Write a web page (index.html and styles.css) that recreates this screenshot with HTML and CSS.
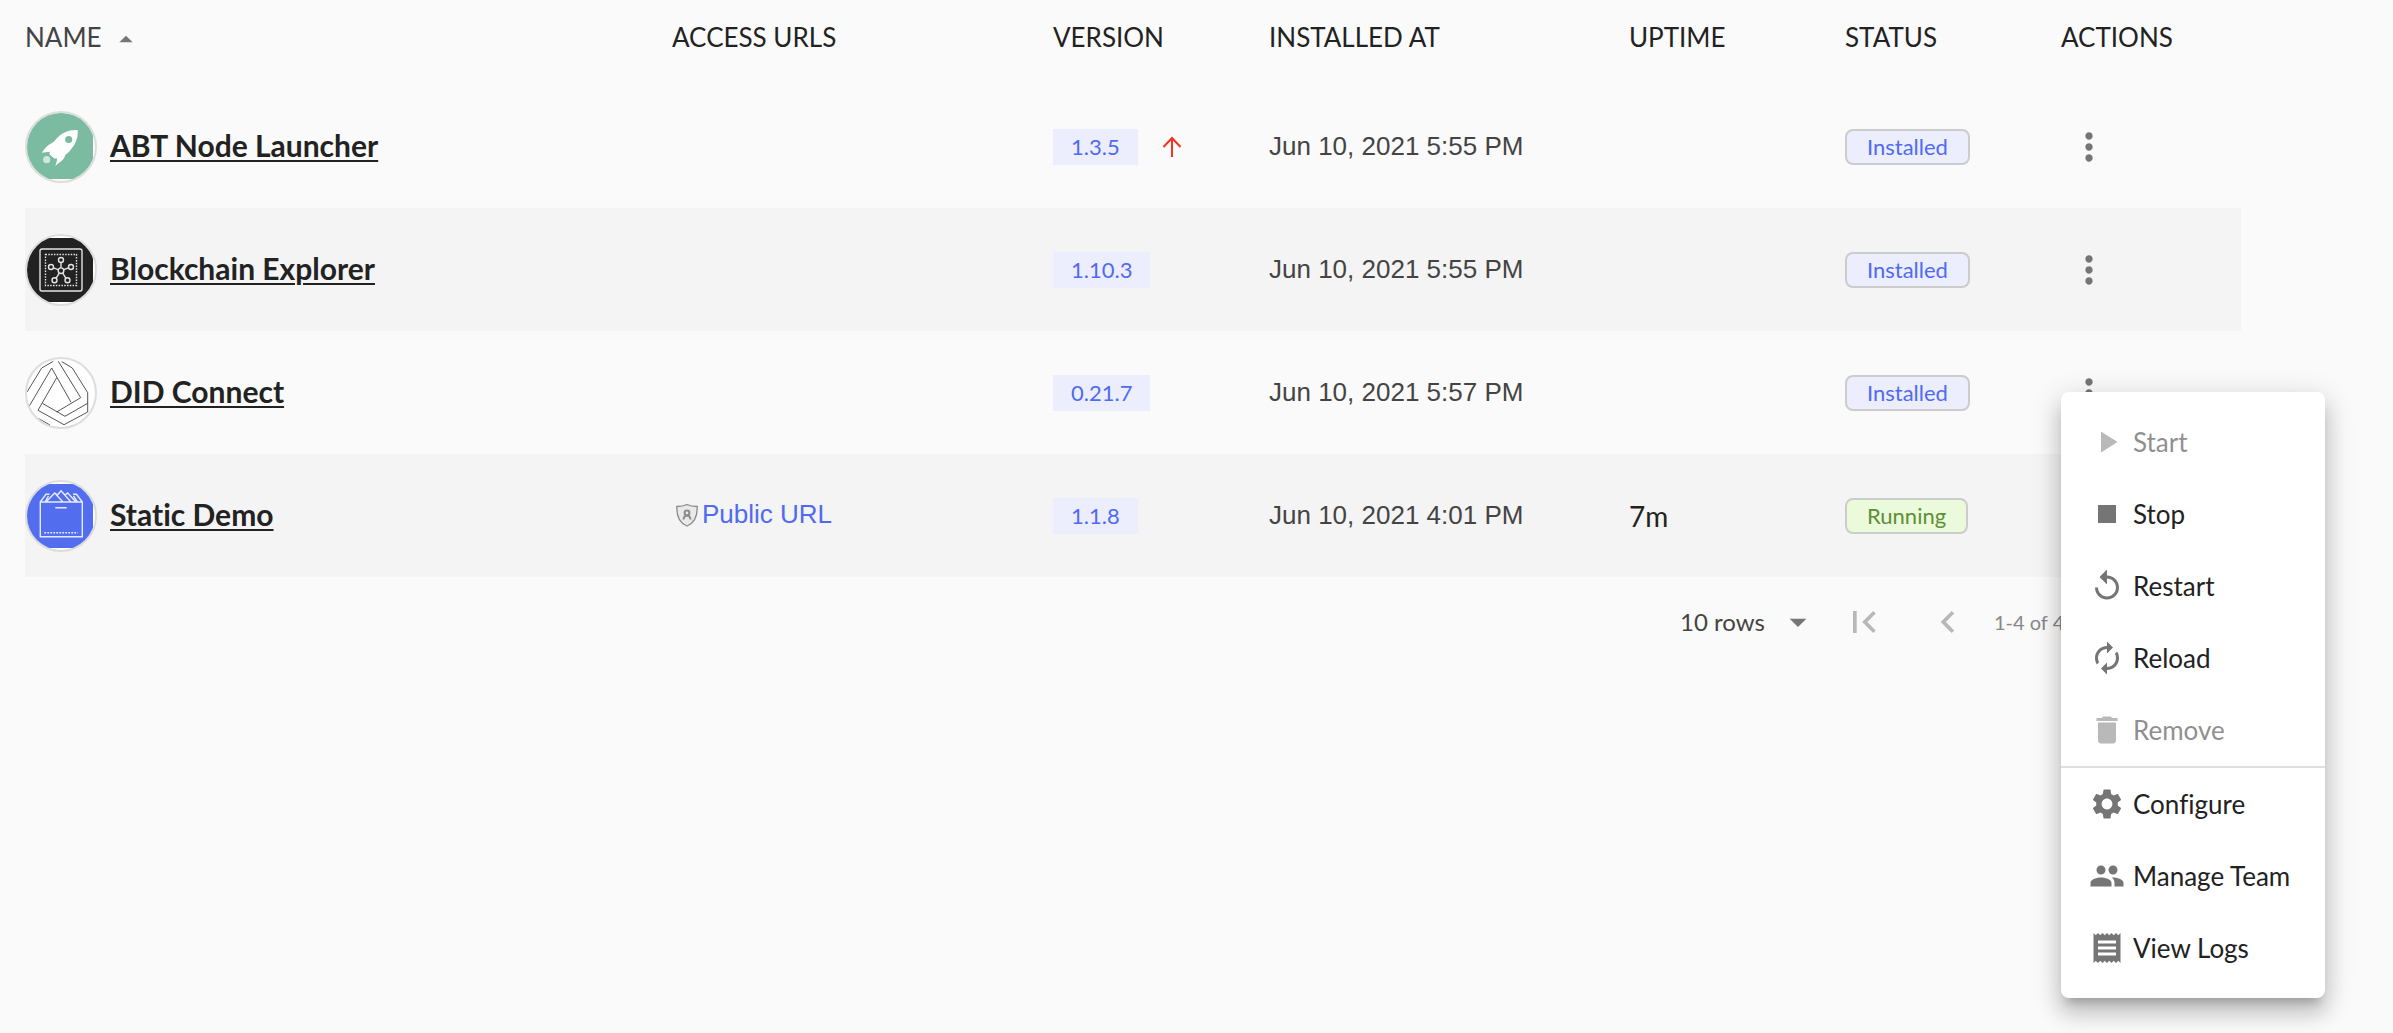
FILE: index.html
```html
<!DOCTYPE html>
<html lang="en">
<head>
<meta charset="utf-8">
<title>Blocklets</title>
<link rel="stylesheet" href="styles.css">
</head>
<body>
<svg class="sprite" aria-hidden="true">
  <symbol id="more" viewBox="0 0 24 24"><path d="M12 8c1.1 0 2-.9 2-2s-.9-2-2-2-2 .9-2 2 .9 2 2 2zm0 2c-1.1 0-2 .9-2 2s.9 2 2 2 2-.9 2-2-.9-2-2-2zm0 6c-1.1 0-2 .9-2 2s.9 2 2 2 2-.9 2-2-.9-2-2-2z"/></symbol>
</svg>
<main class="page">
  <table class="blocklets">
    <colgroup>
      <col class="col-name"><col class="col-urls"><col class="col-version"><col class="col-date"><col class="col-uptime"><col class="col-status"><col class="col-actions">
    </colgroup>
    <thead>
      <tr>
        <th scope="col" aria-sort="ascending"><button class="sort" type="button">NAME<svg width="32" height="32" viewBox="0 0 24 24" aria-hidden="true"><path d="M7 16l5-5 5 5z"/></svg></button></th>
        <th scope="col">ACCESS URLS</th>
        <th scope="col">VERSION</th>
        <th scope="col">INSTALLED AT</th>
        <th scope="col">UPTIME</th>
        <th scope="col">STATUS</th>
        <th scope="col">ACTIONS</th>
      </tr>
    </thead>
    <tbody>
      <tr>
        <td>
          <div class="name">
            <svg class="avatar" viewBox="0 0 72 72" aria-hidden="true">
              <clipPath id="round"><circle cx="36" cy="36" r="34"/></clipPath>
              <circle cx="36" cy="36" r="35" fill="#fff" stroke="#ddd" stroke-width="2"/>
              <g clip-path="url(#round)">
                <rect x="2" y="2" width="66" height="66" fill="#7abba1"/>
                <path fill="#fff" d="M52.7 19C44 18.500 36.500 22 31.500 27.500C29.500 30 28 31.500 27 32C23 33.500 20 37.500 16.700 41.700L25 40.800C24 42.500 24.500 43.500 25.500 44.300L29.300 47.500L31.800 47.200C32.500 50 31 52 30.300 55C35 50.500 39.500 49 40 44.500C41 43 43 42 44.500 40.200C50 34 53.500 27 52.700 19Z"/>
                <circle cx="43.700" cy="28.500" r="3.600" fill="#7abba1"/>
                <circle cx="21.700" cy="48.700" r="3.600" fill="#fff" opacity=".65"/>
              </g>
            </svg>
            <a href="#abt-node-launcher">ABT Node Launcher</a>
          </div>
        </td>
        <td></td>
        <td>
          <div class="version"><span class="tag">1.3.5</span><svg class="upgrade" width="24" height="24" viewBox="0 0 24 24" aria-label="Upgrade available"><path d="M12 22V3M3.500 12L12 3l8.500 9"/></svg></div>
        </td>
        <td class="date">Jun 10, 2021 5:55 PM</td>
        <td></td>
        <td><span class="tag status">Installed</span></td>
        <td><button class="more" type="button" aria-label="Actions"><svg><use href="#more"/></svg></button></td>
      </tr>
      <tr>
        <td>
          <div class="name">
            <svg class="avatar" viewBox="0 0 72 72" aria-hidden="true">
              <circle cx="36" cy="36" r="35" fill="#fff" stroke="#ddd" stroke-width="2"/>
              <g clip-path="url(#round)">
                <rect x="2" y="4" width="66" height="64" fill="#222"/>
                <g fill="none" stroke="#e4e4e4" stroke-width="1.400">
                  <rect x="15" y="15" width="42" height="42" rx="2"/>
                  <rect x="20.500" y="20.500" width="31" height="31" stroke-dasharray="1.500 1.300"/>
                  <circle cx="36" cy="36.700" r="2.800"/><circle cx="36" cy="26" r="2.500"/><circle cx="26" cy="33" r="2.500"/><circle cx="46" cy="33" r="2.500"/><circle cx="29.500" cy="46.300" r="2.500"/><circle cx="42.500" cy="46.300" r="2.500"/>
                  <path d="M36 28.500v5.400M28.400 33.900l4.800 1.800M43.600 33.900l-4.800 1.800M31 44.300l3.300-5.200M41 44.300l-3.300-5.200"/>
                </g>
              </g>
            </svg>
            <a href="#blockchain-explorer">Blockchain Explorer</a>
          </div>
        </td>
        <td></td>
        <td><span class="tag">1.10.3</span></td>
        <td class="date">Jun 10, 2021 5:55 PM</td>
        <td></td>
        <td><span class="tag status">Installed</span></td>
        <td><button class="more" type="button" aria-label="Actions"><svg><use href="#more"/></svg></button></td>
      </tr>
      <tr>
        <td>
          <div class="name">
            <svg class="avatar" viewBox="0 0 72 72" aria-hidden="true">
              <circle cx="36" cy="36" r="35" fill="#fff" stroke="#ddd" stroke-width="2"/>
              <g clip-path="url(#round)" fill="none" stroke="#555">
                <path d="M2 35L16.700 11L28.300 4.300M26.700 11L4.300 49M26.700 11L46 45.300M33.300 4.300L55.700 40.700L31.700 55M36.700 4.500L47.300 11L62.700 35.700V55L39 67.700L13 53.300L31.700 20.700M17.300 46.300L40 59.300L62.700 46.300M13 61.300L25 68"/>
              </g>
            </svg>
            <a href="#did-connect">DID Connect</a>
          </div>
        </td>
        <td></td>
        <td><span class="tag">0.21.7</span></td>
        <td class="date">Jun 10, 2021 5:57 PM</td>
        <td></td>
        <td><span class="tag status">Installed</span></td>
        <td><button class="more" type="button" aria-label="Actions" aria-expanded="true"><svg><use href="#more"/></svg></button></td>
      </tr>
      <tr>
        <td>
          <div class="name">
            <svg class="avatar" viewBox="0 0 72 72" aria-hidden="true">
              <circle cx="36" cy="36" r="35" fill="#fff" stroke="#ddd" stroke-width="2"/>
              <g clip-path="url(#round)">
                <rect x="2" y="4" width="66" height="64" fill="#526eee"/>
                <g fill="none" stroke="#e6eaff" stroke-width="1.400">
                  <path d="M15.300 22H57.300V56.700H15.300ZM15.300 22L21 14.300H24.500M57.300 22L51.500 14.300H48M20 22L23.500 16M52.500 22L48.500 16M21.500 21.500L29.700 13L32.500 15L36 10.700L40 15L42.700 13L50.500 21.500M29.700 13L37.500 21.500M36 10.700L45.500 21.500"/>
                  <path d="M30.300 27.700H41.700"/>
                  <path d="M19.300 52.700H52.700" stroke-dasharray="1.800 1.200"/>
                </g>
              </g>
            </svg>
            <a href="#static-demo">Static Demo</a>
          </div>
        </td>
        <td>
          <a class="url" href="#public-url"><svg width="30" height="30" viewBox="0 0 30 30" aria-hidden="true"><path d="M15 4.500c3 1.500 6.500 2 10.200 2C25.500 16 22.500 23 15 26C7.500 23 4.500 16 4.800 6.500C8.500 6.500 12 6 15 4.500Z" fill="#e9e9e9" stroke="#8b8b8b" stroke-width="1.300"/><circle cx="15" cy="13" r="2.400"/><path d="M11.500 19.500c.3-2.600 1.600-4 3.500-4s3.200 1.400 3.500 4"/></svg>Public URL</a>
        </td>
        <td><span class="tag">1.1.8</span></td>
        <td class="date">Jun 10, 2021 4:01 PM</td>
        <td class="uptime">7m</td>
        <td><span class="tag status running">Running</span></td>
        <td><button class="more" type="button" aria-label="Actions"><svg><use href="#more"/></svg></button></td>
      </tr>
    </tbody>
  </table>

  <nav class="pager" aria-label="Pagination">
    <div class="rows">
      <select aria-label="Rows per page"><option>10 rows</option><option>25 rows</option></select>
      <svg class="caret" width="40" height="40" viewBox="0 0 24 24" aria-hidden="true"><path d="M7 10l5 5 5-5z"/></svg>
    </div>
    <button type="button" disabled aria-label="First page"><svg viewBox="0 0 24 24"><path d="M18.410 16.590L13.820 12l4.590-4.590L17 6l-6 6 6 6zM6 6h2v12H6z"/></svg></button>
    <button type="button" disabled aria-label="Previous page"><svg viewBox="0 0 24 24"><path d="M15.410 7.410L14 6l-6 6 6 6 1.410-1.410L10.830 12z"/></svg></button>
    <span class="range">1-4 of 4</span>
    <button type="button" disabled aria-label="Next page"><svg viewBox="0 0 24 24"><path d="M10 6L8.590 7.410 13.170 12l-4.580 4.590L10 18l6-6z"/></svg></button>
    <button type="button" disabled aria-label="Last page"><svg viewBox="0 0 24 24"><path d="M5.590 7.410L10.180 12l-4.590 4.590L7 18l6-6-6-6zM16 6h2v12h-2z"/></svg></button>
  </nav>
</main>

<div class="menu" role="menu">
  <button type="button" role="menuitem" disabled><svg viewBox="0 0 24 24"><path d="M8 5v14l11-7z"/></svg>Start</button>
  <button type="button" role="menuitem"><svg viewBox="0 0 24 24"><path d="M6 6h12v12H6z"/></svg>Stop</button>
  <button type="button" role="menuitem"><svg viewBox="0 0 24 24"><path d="M12 5V1L7 6l5 5V7c3.310 0 6 2.690 6 6s-2.690 6-6 6-6-2.690-6-6H4c0 4.420 3.580 8 8 8s8-3.580 8-8-3.580-8-8-8z"/></svg>Restart</button>
  <button type="button" role="menuitem"><svg viewBox="0 0 24 24"><path d="M12 6v3l4-4-4-4v3c-4.420 0-8 3.580-8 8 0 1.570.46 3.030 1.240 4.260L6.700 14.800c-.45-.83-.7-1.790-.7-2.800 0-3.310 2.690-6 6-6zm6.760 1.740L17.300 9.200c.44.84.7 1.790.7 2.800 0 3.310-2.690 6-6 6v-3l-4 4 4 4v-3c4.420 0 8-3.580 8-8 0-1.570-.46-3.030-1.240-4.260z"/></svg>Reload</button>
  <button type="button" role="menuitem" disabled><svg viewBox="0 0 24 24"><path d="M6 19c0 1.100.9 2 2 2h8c1.100 0 2-.9 2-2V7H6v12zM19 4h-3.500l-1-1h-5l-1 1H5v2h14V4z"/></svg>Remove</button>
  <hr>
  <button type="button" role="menuitem"><svg viewBox="0 0 24 24"><path d="M19.140 12.940c.04-.3.06-.61.06-.94 0-.32-.02-.64-.07-.94l2.030-1.580c.18-.14.23-.41.12-.61l-1.920-3.320c-.12-.22-.37-.29-.59-.22l-2.390.96c-.5-.38-1.030-.7-1.620-.94l-.36-2.540c-.04-.24-.24-.41-.48-.41h-3.840c-.24 0-.43.17-.47.41l-.36 2.540c-.59.24-1.130.57-1.620.94l-2.390-.96c-.22-.08-.47 0-.59.22L2.740 8.870c-.12.21-.08.47.12.61l2.030 1.580c-.05.3-.09.63-.09.94s.02.64.07.94l-2.030 1.580c-.18.14-.23.41-.12.61l1.920 3.320c.12.22.37.29.59.22l2.390-.96c.5.38 1.030.7 1.620.94l.36 2.540c.05.24.24.41.48.41h3.840c.24 0 .44-.17.47-.41l.36-2.540c.59-.24 1.130-.56 1.620-.94l2.390.96c.22.08.47 0 .59-.22l1.920-3.320c.12-.22.07-.47-.12-.61l-2.010-1.580zM12 15.600c-1.980 0-3.600-1.620-3.600-3.600s1.620-3.600 3.600-3.600 3.600 1.620 3.600 3.600-1.620 3.600-3.600 3.600z"/></svg>Configure</button>
  <button type="button" role="menuitem"><svg viewBox="0 0 24 24"><path d="M16 11c1.660 0 2.990-1.340 2.990-3S17.660 5 16 5c-1.660 0-3 1.340-3 3s1.340 3 3 3zm-8 0c1.660 0 2.990-1.340 2.990-3S9.660 5 8 5C6.340 5 5 6.340 5 8s1.340 3 3 3zm0 2c-2.330 0-7 1.170-7 3.500V19h14v-2.500c0-2.330-4.670-3.500-7-3.500zm8 0c-.29 0-.62.02-.97.05 1.160.84 1.970 1.970 1.970 3.450V19h6v-2.500c0-2.330-4.670-3.500-7-3.500z"/></svg>Manage Team</button>
  <button type="button" role="menuitem"><svg viewBox="0 0 24 24"><path d="M18 17H6v-2h12v2zm0-4H6v-2h12v2zm0-4H6V7h12v2zM3 22l1.500-1.500L6 22l1.500-1.500L9 22l1.500-1.500L12 22l1.500-1.500L15 22l1.500-1.500L18 22l1.500-1.500L21 22V2l-1.500 1.500L18 2l-1.500 1.500L15 2l-1.500 1.500L12 2l-1.500 1.500L9 2 7.500 3.500 6 2 4.500 3.500 3 2v20z"/></svg>View Logs</button>
</div>
</body>
</html>
```
FILE: styles.css
```css
* { box-sizing: border-box; }

body {
  margin: 0;
  background: #fafafa;
  color: #222;
  font-family: Lato, "Liberation Sans", sans-serif;
  font-size: 26px;
  font-variant-ligatures: none;
}

button, select {
  padding: 0;
  border: 0;
  background: none;
  color: inherit;
  font: inherit;
  font-variant-ligatures: none;
}

svg { display: block; flex: none; }
.sprite { position: absolute; width: 0; height: 0; }

.page { padding: 0 152px 0 25px; }

.blocklets {
  width: 100%;
  border-collapse: collapse;
  table-layout: fixed;
}
.col-urls { width: 381px; }
.col-version, .col-uptime, .col-status { width: 216px; }
.col-date { width: 360px; }
.col-actions { width: 180px; }

th {
  height: 85px;
  padding: 0 0 12px;
  text-align: left;
  font-weight: 400;
}
td { height: 123px; padding: 0; }
tbody tr:nth-child(even) { background: #f4f4f4; }

.sort { display: flex; align-items: center; gap: 8px; color: #444; }
.sort svg { fill: #757575; }

.name { display: flex; align-items: center; gap: 13px; }
.name a {
  padding-bottom: 4px;
  color: #222;
  font-size: 30px;
  font-weight: 700;
  text-decoration-thickness: 2px;
  text-underline-offset: 3px;
}
.avatar { width: 72px; height: 72px; }

.url {
  display: flex;
  align-items: center;
  padding-bottom: 2px;
  color: #4f6af3;
  font-family: "Liberation Sans", sans-serif;
  text-decoration: none;
}
.url svg { fill: none; stroke: #8b8b8b; stroke-width: 2; }

.version { display: flex; align-items: center; gap: 22px; }
.upgrade { fill: none; stroke: #f8311f; stroke-width: 2; }

.tag {
  display: inline-flex;
  align-items: center;
  height: 36px;
  padding: 0 18px;
  background: #eceefe;
  color: #4f6af3;
  font-size: 22px;
}
.status { padding: 0 20px; border: 2px solid #ccc; border-radius: 8px; }
.running { background: #eafada; color: #5f8f35; }

.date { color: #444; font-family: "Liberation Sans", sans-serif; }
.uptime { font-size: 28px; }

.more { display: flex; justify-content: center; width: 56px; }
.more svg { width: 44px; height: 44px; fill: #757575; }

.pager {
  display: flex;
  justify-content: flex-end;
  align-items: center;
  height: 90px;
}
.pager button { display: flex; justify-content: center; width: 84px; }
.pager button svg { width: 44px; height: 44px; fill: #b8b8b8; }
.rows { display: flex; align-items: center; color: #444; }
.rows select { width: 140px; padding-bottom: 2px; appearance: none; font-size: 24px; }
.caret { margin-left: -42px; margin-right: 4px; fill: #757575; pointer-events: none; }
.range { min-width: 83px; padding-left: 4px; color: #888; font-size: 20px; }

.menu {
  position: absolute;
  top: 392px;
  right: 68px;
  width: 264px;
  padding: 14px 0;
  border-radius: 8px;
  background: #fff;
  box-shadow: 0 10px 10px -6px rgba(0, 0, 0, .2), 0 16px 20px 2px rgba(0, 0, 0, .14), 0 6px 28px 4px rgba(0, 0, 0, .12);
}
.menu button {
  display: flex;
  align-items: center;
  gap: 8px;
  width: 100%;
  height: 72px;
  padding: 0 28px;
  white-space: nowrap;
}
.menu button:disabled { opacity: .5; }
.menu svg { width: 36px; height: 36px; fill: #757575; }
.menu hr { height: 2px; margin: 0; border: 0; background: #e0e0e0; }
```
